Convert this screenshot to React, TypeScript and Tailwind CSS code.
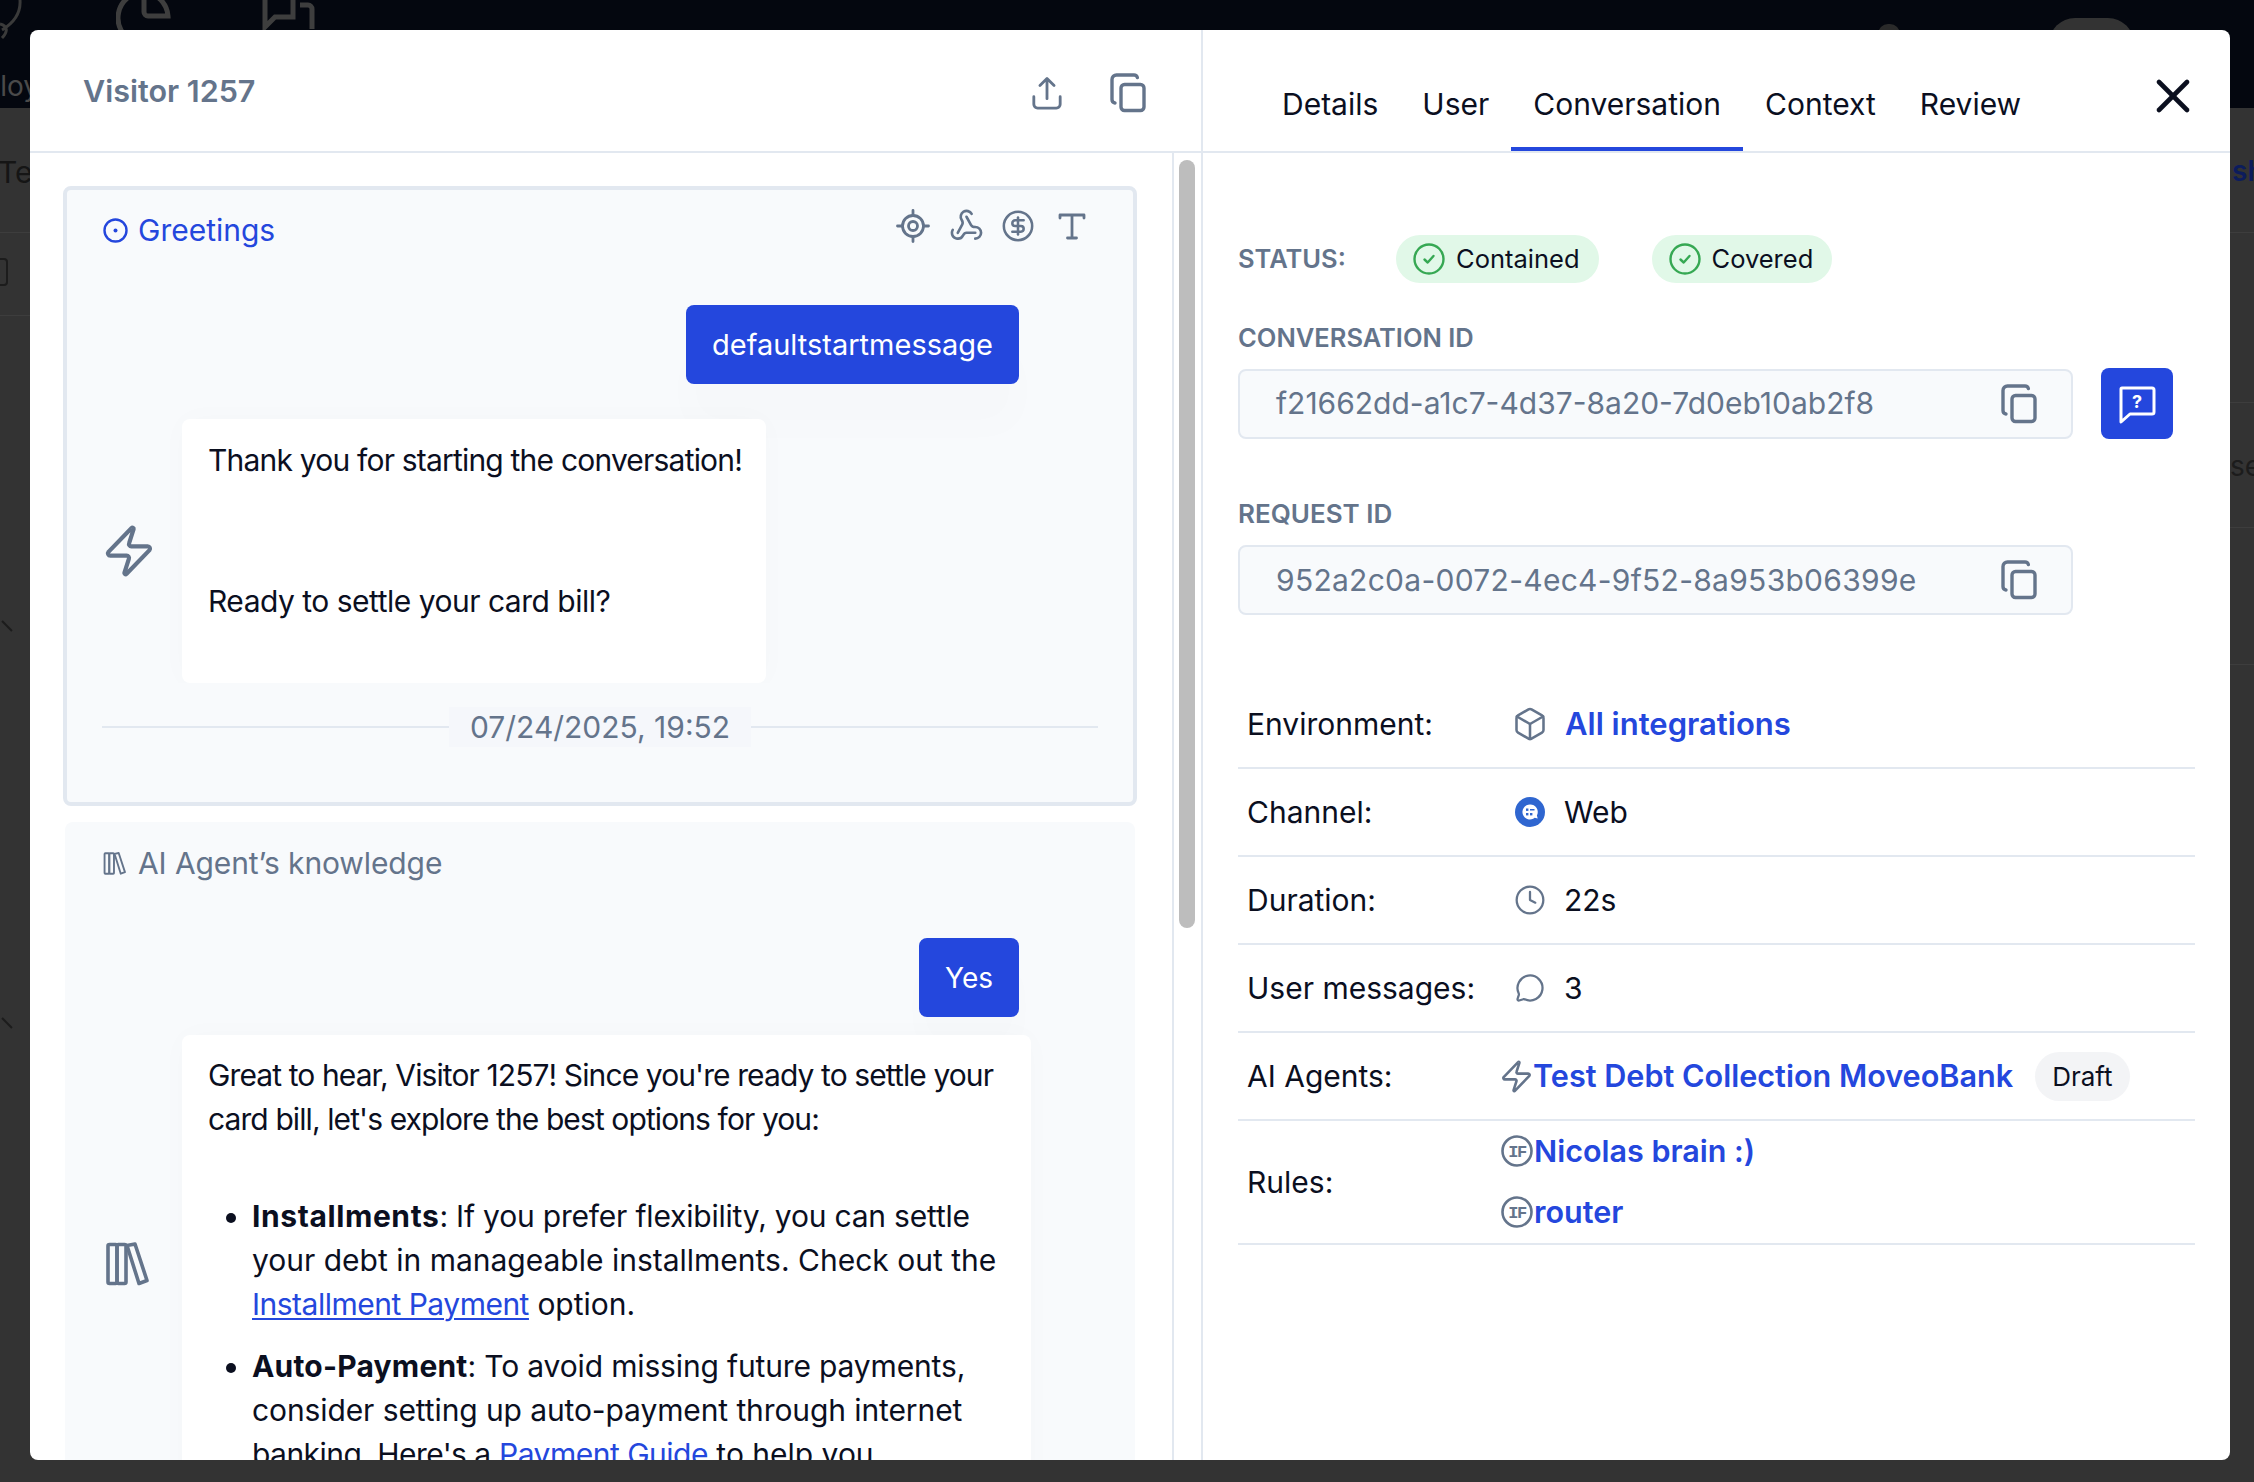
import React from "react";
import { Zap, Webhook, CircleDollarSign, Box, Clock, MessageCircle, X } from "lucide-react";

const CopyIcon = () => (
  <svg width="40" height="40" viewBox="0 0 40 40" fill="none" stroke="#64748b" strokeWidth="3.4" strokeLinecap="round" strokeLinejoin="round">
    <rect x="13" y="11.5" width="23" height="26" rx="3.5" />
    <path d="M7 30c-1.8-.3-3-1.6-3-3.4V6.5C4 4 6 2 8.5 2H26c1.800 0 3 1.100 3.400 2.600" />
  </svg>
);

const UploadIcon = () => (
  <svg width="32" height="36" viewBox="0 0 34 36" fill="none" stroke="#64748b" strokeWidth="3" strokeLinecap="round" strokeLinejoin="round">
    <path d="M17 24V3M9.500 10 17 2.500 24.500 10" />
    <path d="M3 22v8c0 2.500 1.800 4 4 4h20c2.200 0 4-1.500 4-4v-8" />
  </svg>
);

const TargetIcon = () => (
  <svg width="34" height="34" viewBox="0 0 34 34" fill="none" stroke="#64748b" strokeWidth="2.800" strokeLinecap="round">
    <circle cx="17" cy="17" r="10.500" />
    <circle cx="17" cy="17" r="4.500" />
    <path d="M17 1.500v5M17 27.500v5M1.500 17h5M27.500 17h5" />
  </svg>
);

const TIcon = () => (
  <svg width="30" height="30" viewBox="0 0 30 30" fill="none" stroke="#64748b" strokeWidth="2.800" strokeLinecap="round" strokeLinejoin="round" className="ml-[3px]">
    <path d="M3 7V4h24v3M15 4v23M10.500 27h9" />
  </svg>
);

const BooksIcon = ({ s = 44, w = 3.600 }: { s?: number; w?: number }) => (
  <svg width={s} height={s} viewBox="0 0 44 44" fill="none" stroke="#64748b" strokeWidth={w} strokeLinejoin="round">
    <rect x="3" y="2.500" width="9" height="39" rx="1.500" />
    <rect x="12" y="2.500" width="9" height="39" rx="1.500" />
    <path d="m22 3.500 8-1.500 12 36.500-8 3z" />
  </svg>
);

const CheckPill = ({ label }: { label: string }) => (
  <div className="flex h-[48px] items-center gap-[11px] rounded-full bg-[#e1f8e8] pl-[17px] pr-[19px] text-[25.5px] text-[#0b0f1f]">
    <svg width="32" height="32" viewBox="0 0 32 32" fill="none" stroke="#36a853" strokeWidth="2.400" strokeLinecap="round" strokeLinejoin="round">
      <circle cx="16" cy="16" r="14.500" />
      <path d="m11.500 16.500 3.200 3 5.800-6.500" />
    </svg>
    <span>{label}</span>
  </div>
);

const IdField = ({ value, wide }: { value: string; wide?: boolean }) => (
  <div className={`flex h-[70px] w-[835px] items-center justify-between rounded-lg border-2 border-[#e2e8f0] bg-[#f8fafc] pl-[36px] pr-[32px] text-[30px] text-[#64748b] ${wide ? "tracking-[0.28px]" : ""}`}>
    <span>{value}</span>
    <CopyIcon />
  </div>
);

const IfIcon = () => (
  <svg width="32" height="32" viewBox="0 0 32 32" fill="none">
    <circle cx="16" cy="16" r="14.500" stroke="#64748b" strokeWidth="2.600" />
    <text x="16" y="21.500" textAnchor="middle" fontFamily="'Liberation Mono', monospace" fontWeight="700" fontSize="17" fill="#64748b" letterSpacing="-1.500">IF</text>
  </svg>
);

const WebIcon = () => (
  <svg width="30" height="30" viewBox="0 0 30 30">
    <circle cx="15" cy="15" r="15" fill="#2f66d0" />
    <path d="M15 7.500a7.500 7.500 0 1 0 4.700 13.300l3 .7-.8-3A7.500 7.500 0 0 0 15 7.500z" fill="#fff" />
    <rect x="11" y="11.500" width="2.400" height="2.400" fill="#2f66d0" />
    <rect x="15" y="12" width="4.500" height="1.500" fill="#2f66d0" />
    <rect x="11" y="16" width="2.400" height="2.400" fill="#2f66d0" />
    <rect x="15" y="16" width="2.400" height="2.400" fill="#2f66d0" />
  </svg>
);

const Row = ({ label, children, tall }: { label: string; children: React.ReactNode; tall?: boolean }) => (
  <div className={`flex items-center border-b-2 border-[#e2e8f0] ${tall ? "h-[124px]" : "h-[88px]"}`}>
    <div className="w-[263px] shrink-0 pl-[9px] text-[30px] text-[#0b0f1f]">{label}</div>
    {children}
  </div>
);

const IconValue = ({ icon, children }: { icon: React.ReactNode; children: React.ReactNode }) => (
  <div className="flex items-center gap-[19px] pl-[14px] text-[30px] text-[#0b0f1f]">
    <span className="flex w-[30px] justify-center">{icon}</span>
    {children}
  </div>
);

const Tab = ({ label, active }: { label: string; active?: boolean }) => (
  <div className={`flex h-full items-center border-b-4 px-[22px] pt-[31px] text-[30px] text-[#0b0f1f] ${active ? "border-[#2447dd]" : "border-transparent"}`}>
    {label}
  </div>
);

const Link = ({ children }: { children: React.ReactNode }) => (
  <span className="text-[#2447dd] underline decoration-2 underline-offset-[3px] tracking-[-0.5px]">{children}</span>
);

export default function App() {
  return (
    <div className="relative h-[1482px] w-[2254px] overflow-hidden bg-[#333333] [font-family:Inter,'Liberation_Sans',sans-serif]">
      {/* page dimmed behind the dialog */}
      <div className="flex h-[108px] items-start bg-[#04070f]" />
      <svg className="absolute left-0 top-0" width="30" height="45" viewBox="0 0 30 45" fill="none" stroke="#3a3a3a" strokeWidth="3">
        <path d="M20 0c1 14-8 24-18 30M0 24c8 2 8 8 2 14" />
      </svg>
      <svg className="absolute left-[116px] top-[-10px]" width="60" height="50" viewBox="0 0 60 50" fill="none" stroke="#3e3e3e" strokeWidth="5">
        <path d="M28 2a26 26 0 0 0-10 50M28 2v20a4 4 0 0 0 4 4h20A26 26 0 0 0 28 2z" />
      </svg>
      <svg className="absolute left-[260px] top-[-10px]" width="60" height="50" viewBox="0 0 60 50" fill="none" stroke="#3e3e3e" strokeWidth="5">
        <path d="M5 5a4 4 0 0 1 4-4h20a4 4 0 0 1 4 4v22H15l-10 10zM40 15h8a4 4 0 0 1 4 4v20" />
      </svg>
      <div className="absolute left-[2049px] top-[18px] h-[60px] w-[85px] rounded-t-[26px] bg-[#333333]" />
      <div className="absolute left-[1878px] top-[24px] h-[20px] w-[22px] rounded-full bg-[#2a2a2a]" />
      <span className="absolute left-[-17px] top-[65px] text-[28px] text-[#4a4a4a]">ploy</span>
      <span className="absolute left-[-2px] top-[150px] text-[30px] text-[#151515]">Tes</span>
      <span className="absolute left-[2232px] top-[150px] text-[28px] font-semibold text-[#0c1c5c]">sh</span>
      <span className="absolute left-[2230px] top-[445px] text-[28px] text-[#1c1c1c]">se</span>
      <div className="absolute left-0 top-[232px] h-px w-[30px] bg-[#3d3d3d]" />
      <div className="absolute left-[2230px] top-[232px] h-px w-[24px] bg-[#3d3d3d]" />
      <div className="absolute left-[2230px] top-[402px] h-px w-[24px] bg-[#3d3d3d]" />
      <div className="absolute left-[2230px] top-[527px] h-px w-[24px] bg-[#3d3d3d]" />
      <div className="absolute left-[2230px] top-[664px] h-px w-[24px] bg-[#3d3d3d]" />
      <div className="absolute left-0 top-[315px] h-px w-[30px] bg-[#3d3d3d]" />
      <div className="absolute left-[-12px] top-[258px] h-[28px] w-[20px] rounded border-2 border-[#1c1c1c]" />
      <div className="absolute left-0 top-[625px] h-[2px] w-[14px] rotate-[45deg] bg-[#1c1c1c]" />
      <div className="absolute left-0 top-[1022px] h-[2px] w-[14px] rotate-[45deg] bg-[#1c1c1c]" />

      {/* dialog */}
      <div className="absolute left-[30px] top-[30px] flex h-[1430px] w-[2200px] overflow-hidden rounded-lg bg-white">
        {/* left */}
        <div className="flex w-[1171px] shrink-0 flex-col">
          <div className="flex h-[123px] shrink-0 items-start justify-between border-b-2 border-[#e2e8f0] pl-[53px] pr-[53px]">
            <h2 className="mt-[40px] text-[30.5px] leading-[42px] font-semibold text-[#64748b]">Visitor 1257</h2>
            <div className="mt-[43px] flex items-center gap-[45px]">
              <UploadIcon />
              <CopyIcon />
            </div>
          </div>
          <div className="flex min-h-0 flex-1">
            <div className="w-[1142px] shrink-0 overflow-hidden pl-[33px] pr-[35px] pt-[33px]">
              {/* card 1 */}
              <div className="h-[620px] rounded-lg border-4 border-[#e2e8f0] bg-[#f8fafc]">
                <div className="flex items-start justify-between pl-[36px] pr-[46px] pt-[20px]">
                  <div className="flex h-[40px] items-center gap-[10px] text-[30px] text-[#2447dd]">
                    <svg width="25" height="25" viewBox="0 0 25 25" fill="none" stroke="#2447dd" strokeWidth="2.400">
                      <circle cx="12.500" cy="12.500" r="11" />
                      <circle cx="12.500" cy="12.500" r="2" fill="#2447dd" stroke="none" />
                    </svg>
                    <span>Greetings</span>
                  </div>
                  <div className="-mt-[2px] flex items-center gap-[19px] text-[#64748b]">
                    <TargetIcon />
                    <Webhook size={35} strokeWidth={1.800} />
                    <span className="-ml-[2px] flex">
                      <CircleDollarSign size={34} strokeWidth={1.800} />
                    </span>
                    <TIcon />
                  </div>
                </div>
                <div className="mt-[55px] flex justify-end pr-[114px]">
                  <div className="flex h-[79px] items-center rounded-lg bg-[#2447dd] px-[26px] text-[29px] text-white shadow-[0_45px_40px_rgba(0,0,0,0.012)]">
                    defaultstartmessage
                  </div>
                </div>
                <div className="mt-[35px] flex items-center">
                  <div className="ml-[34px] mr-[25px] w-[56px] shrink-0 text-[#64748b]">
                    <Zap size={56} strokeWidth={1.800} />
                  </div>
                  <div className="h-[264px] w-[584px] rounded-lg bg-white px-[26px] pt-[19px] text-[30px] leading-[44px] tracking-[-0.8px] text-[#0b0f1f] shadow-[0_0_30px_rgba(0,0,0,0.02)] [clip-path:inset(-60px_-60px_0_-60px)]">
                    <p className="mb-[97px] whitespace-nowrap">Thank you for starting the conversation!</p>
                    <p className="tracking-[-0.5px]">Ready to settle your card bill?</p>
                  </div>
                </div>
                <div className="mx-[35px] mt-[24px] flex items-center">
                  <div className="h-[2px] flex-1 bg-[#e2e8f0]" />
                  <div className="flex h-[40px] items-center bg-[#f5f7fb] px-[21px] text-[30px] text-[#64748b]">07/24/2025, 19:52</div>
                  <div className="h-[2px] flex-1 bg-[#e2e8f0]" />
                </div>
              </div>
              {/* card 2 */}
              <div className="mx-[2px] mt-[16px] h-[700px] rounded-lg bg-[#f8fafc] pt-[21px]">
                <div className="flex h-[40px] items-center gap-[12px] pl-[38px] text-[30px] tracking-[-0.1px] text-[#64748b]">
                  <BooksIcon s={23} w={3.600} />
                  <span>AI Agent’s knowledge</span>
                </div>
                <div className="mt-[55px] flex justify-end pr-[116px]">
                  <div className="flex h-[79px] items-center rounded-lg bg-[#2447dd] px-[26px] text-[28px] text-white shadow-[0_30px_30px_rgba(0,0,0,0.012)]">
                    Yes
                  </div>
                </div>
                <div className="mt-[18px] flex items-center">
                  <div className="ml-[40px] mr-[33px] w-[44px] shrink-0">
                    <BooksIcon />
                  </div>
                  <div className="h-[458px] w-[849px] shrink-0 whitespace-nowrap rounded-lg bg-white px-[26px] pt-[18px] text-[30px] leading-[44px] text-[#0b0f1f] shadow-[0_0_30px_rgba(0,0,0,0.02)]">
                    <p className="tracking-[-0.9px]">
                      Great to hear, Visitor 1257! Since you're ready to settle your
                      <br />
                      card bill, let's explore the best options for you:
                    </p>
                    <ul className="mt-[53px] list-disc pl-[44px]">
                      <li>
                        <b className="font-bold tracking-[0.6px]">Installments</b><span className="tracking-[-0.2px]">: If you prefer flexibility, you can settle</span>
                        <br />
                        your debt in manageable installments. Check out the
                        <br />
                        <Link>Installment Payment</Link> option.
                      </li>
                      <li className="mt-[18px]">
                        <b className="font-bold tracking-[0.2px]">Auto-Payment</b><span className="tracking-[-0.15px]">: To avoid missing future payments,</span>
                        <br />
                        <span className="tracking-[-0.1px]">consider setting up auto-payment through internet</span>
                        <br />
                        <span className="tracking-[-0.55px]">banking. Here's a</span> <Link>Payment Guide</Link> to help you.
                      </li>
                    </ul>
                  </div>
                </div>
              </div>
            </div>
            <div className="flex-1 border-l-2 border-[#e2e8f0] pl-[5px] pt-[7px]">
              <div className="h-[768px] w-[16px] rounded-full bg-[#bdbdbd]" />
            </div>
          </div>
        </div>

        {/* right */}
        <div className="flex min-w-0 flex-1 flex-col border-l-2 border-[#e2e8f0]">
          <div className="flex h-[123px] shrink-0 items-stretch border-b-2 border-[#e2e8f0] pl-[57px] pr-[41px]">
            <Tab label="Details" />
            <Tab label="User" />
            <Tab label="Conversation" active />
            <Tab label="Context" />
            <Tab label="Review" />
            <div className="ml-auto mt-[38px] h-[56px] text-[#0b0f1f]">
              <X size={56} strokeWidth={2} className="-mr-[12px]" />
            </div>
          </div>
          <div className="pl-[35px] pr-[35px] pt-[82px]">
            <div className="flex items-center">
              <span className="w-[158px] text-[25.5px] font-semibold text-[#64748b]">STATUS:</span>
              <div className="flex gap-[53px]">
                <CheckPill label="Contained" />
                <CheckPill label="Covered" />
              </div>
            </div>
            <div className="mt-[33px] text-[25.5px] leading-[44px] font-semibold text-[#64748b]">CONVERSATION ID</div>
            <div className="mt-[8px] flex items-center gap-[28px]">
              <IdField value="f21662dd-a1c7-4d37-8a20-7d0eb10ab2f8" />
              <div className="flex h-[71px] w-[72px] items-center justify-center rounded-lg bg-[#2447dd]">
                <svg width="40" height="40" viewBox="0 0 40 40" fill="none" stroke="#fff" strokeWidth="3" strokeLinejoin="round">
                  <path d="M5 4h30a2 2 0 0 1 2 2v22a2 2 0 0 1-2 2H13l-9 8V5a1 1 0 0 1 1-1z" />
                  <text x="20" y="24" textAnchor="middle" fontFamily="Inter, sans-serif" fontWeight="700" fontSize="18" fill="#fff" stroke="none">?</text>
                </svg>
              </div>
            </div>
            <div className="mt-[53px] text-[26px] leading-[44px] font-semibold text-[#64748b]">REQUEST ID</div>
            <div className="mt-[9px]">
              <IdField value="952a2c0a-0072-4ec4-9f52-8a953b06399e" wide />
            </div>
            <div className="mt-[66px]">
              <Row label="Environment:">
                <IconValue icon={<Box size={36} strokeWidth={1.700} className="shrink-0 text-[#64748b]" />}>
                  <span className="ml-[1px] text-[31px] font-semibold text-[#2447dd]">All integrations</span>
                </IconValue>
              </Row>
              <Row label="Channel:">
                <IconValue icon={<WebIcon />}>Web</IconValue>
              </Row>
              <Row label="Duration:">
                <IconValue icon={<Clock size={32} strokeWidth={1.700} className="shrink-0 text-[#64748b]" />}>22s</IconValue>
              </Row>
              <Row label="User messages:">
                <IconValue icon={<MessageCircle size={30} strokeWidth={1.800} className="shrink-0 text-[#64748b]" />}>3</IconValue>
              </Row>
              <Row label="AI Agents:">
                <div className="flex items-center text-[30.6px] font-semibold text-[#2447dd]">
                  <Zap size={35} strokeWidth={1.800} className="-ml-[2px] -mr-[1px] shrink-0 text-[#64748b]" />
                  <span>Test Debt Collection MoveoBank</span>
                  <span className="ml-[22px] flex h-[49px] items-center rounded-full bg-[#f3f4f6] px-[17px] text-[26px] font-normal text-[#0b0f1f]">Draft</span>
                </div>
              </Row>
              <Row label="Rules:" tall>
                <div className="-mt-[2px] flex flex-col gap-[19px] text-[30.5px] leading-[42px] font-semibold text-[#2447dd]">
                  <div className="flex items-center gap-[1px]">
                    <IfIcon />
                    <span>Nicolas brain :)</span>
                  </div>
                  <div className="flex items-center gap-[1px]">
                    <IfIcon />
                    <span>router</span>
                  </div>
                </div>
              </Row>
            </div>
          </div>
        </div>
      </div>
    </div>
  );
}
